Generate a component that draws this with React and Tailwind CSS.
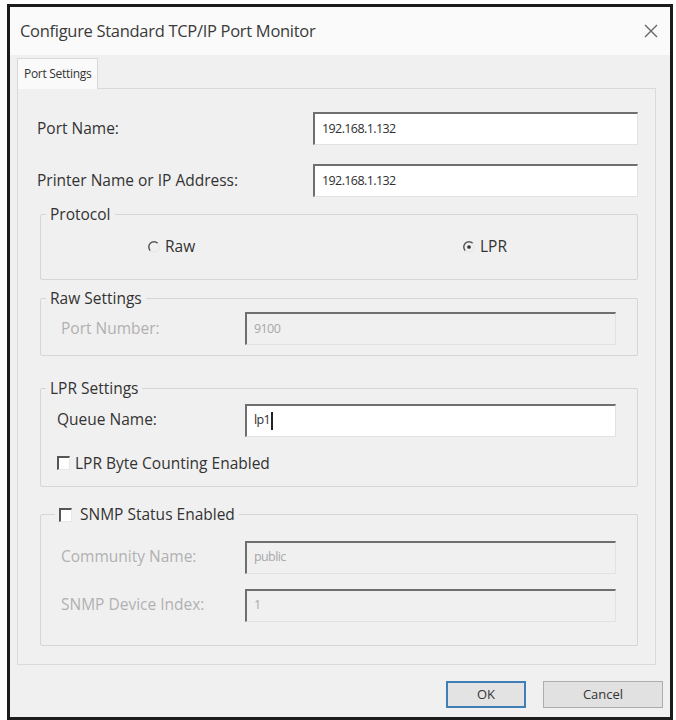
import React from 'react';

const font = { fontFamily: '"Open Sans", "Noto Sans", sans-serif' };

function Field({ value, disabled, caret, className = '' }) {
  return (
    <div
      className={`h-[33px] flex items-center pl-[7px] text-[12.5px] tracking-[-0.6px] border-t-2 border-l-2 border-t-[#6f6f6f] border-l-[#6f6f6f] border-r border-b border-r-[#e2e2e2] border-b-[#e2e2e2] ${
        disabled ? 'bg-[#f0f0f0] text-[#a8a8a8]' : 'bg-white text-[#2e2e2e]'
      } ${className}`}
    >
      <span>{value}</span>
      {caret && <span className="ml-[1px] w-[2px] h-[18px] bg-[#222]" />}
    </div>
  );
}

function Radio({ checked, label }) {
  return (
    <div className="flex items-center gap-[5px]">
      <svg width="12" height="12" viewBox="0 0 13 13">
        <path d="M10.5 2.5 A5.5 5.5 0 1 0 2.5 10.5" fill="none" stroke="#555" strokeWidth="1.6" />
        <path d="M10.5 2.5 A5.5 5.5 0 0 1 2.5 10.5" fill="none" stroke="#e6e6e6" strokeWidth="1.2" />
        {checked && <circle cx="6.5" cy="6.5" r="2" fill="#333" />}
      </svg>
      <span>{label}</span>
    </div>
  );
}

function Check() {
  return (
    <span className="w-[13px] h-[14px] border-t-2 border-l-2 border-t-[#555] border-l-[#555] border-r border-b border-r-[#e8e8e8] border-b-[#e8e8e8] bg-white" />
  );
}

function Group({ title, children, className = '' }) {
  return (
    <fieldset className={`border border-[#d6d6d6] rounded-[2px] px-[16px] mx-0 ${className}`}>
      <legend className="px-[4px] ml-[-11px] text-[#333]">{title}</legend>
      {children}
    </fieldset>
  );
}

export default function App() {
  return (
    <div className="w-[676px] h-[720px] bg-white pt-[4px] pl-[7px] text-[15.5px] leading-none" style={font}>
      <div className="w-[666px] h-[716px] border-[3px] border-[#1c1c1c] bg-[#f0f0f0] flex flex-col">
        {/* title bar */}
        <div className="h-[48px] bg-[#fafafa] flex items-center justify-between pl-[10px] pr-[12px]">
          <span className="text-[#3a3a3a] text-[16.5px] tracking-[-0.3px]">Configure Standard TCP/IP Port Monitor</span>
          <svg width="14" height="14" viewBox="0 0 14 14">
            <path d="M1 1 L13 13 M13 1 L1 13" stroke="#666" strokeWidth="1.4" />
          </svg>
        </div>

        {/* tabs */}
        <div className="flex items-end pl-[7px] pr-[14px] mt-[3px]">
          <div className="h-[31px] px-[6px] flex items-center bg-[#fafafa] border border-b-0 border-[#d9d9d9] text-[#333] text-[12px] tracking-[-0.3px]">
            Port Settings
          </div>
          <div className="flex-1 border-b border-[#d9d9d9]" />
        </div>

        {/* panel */}
        <div className="mx-[7px] mr-[14px] h-[576px] bg-[#f0f0f0] border border-t-0 border-[#dadada] pl-[22px] pr-[17px] text-[#333]">
          <div className="flex items-center mt-[23px] h-[33px]">
            <span className="w-[276px] ml-[-3px]">Port Name:</span>
            <Field value="192.168.1.132" className="flex-1" />
          </div>
          <div className="flex items-center mt-[19px] h-[33px]">
            <span className="w-[276px] ml-[-3px]">Printer Name or IP Address:</span>
            <Field value="192.168.1.132" className="flex-1" />
          </div>

          <Group title="Protocol" className="mt-[10px] h-[73px]">
            <div className="flex items-center h-[48px] pl-[91px]">
              <div className="w-[315px]">
                <Radio label="Raw" />
              </div>
              <Radio checked label="LPR" />
            </div>
          </Group>

          <Group title="Raw Settings" className="mt-[11px] h-[65px]">
            <div className="flex items-center h-[44px] pr-[5px] text-[#b0b0b0]">
              <span className="w-[188px] pl-[4px]">Port Number:</span>
              <Field value="9100" disabled className="flex-1" />
            </div>
          </Group>

          <Group title="LPR Settings" className="mt-[25px] h-[106px]">
            <div className="flex items-center h-[47px] pr-[5px]">
              <span className="w-[188px]">Queue Name:</span>
              <Field value="lp1" caret className="flex-1" />
            </div>
            <div className="flex items-center gap-[5px] mt-[12px]">
              <Check />
              <span>LPR Byte Counting Enabled</span>
            </div>
          </Group>

          <fieldset className="border border-[#d6d6d6] rounded-[2px] px-[16px] mt-[20px] h-[139px]">
            <legend className="px-[4px] ml-[-2px] flex items-center gap-[8px] text-[#333]">
              <Check />
              <span>SNMP Status Enabled</span>
            </legend>
            <div className="flex items-center h-[35px] mt-[17px] pr-[5px] text-[#b0b0b0]">
              <span className="w-[188px] pl-[4px]">Community Name:</span>
              <Field value="public" disabled className="flex-1" />
            </div>
            <div className="flex items-center h-[35px] mt-[13px] pr-[5px] text-[#b0b0b0]">
              <span className="w-[188px] pl-[4px]">SNMP Device Index:</span>
              <Field value="1" disabled className="flex-1" />
            </div>
          </fieldset>
        </div>

        {/* buttons */}
        <div className="flex justify-end gap-[17px] pr-[7px] mt-[16px]">
          <button className="w-[80px] h-[27px] border-2 border-[#3f7fb5] bg-[#e3e3e3] text-[#333] text-[13px]">OK</button>
          <button className="w-[120px] h-[27px] border border-[#adadad] bg-[#e1e1e1] text-[#333] text-[13px]">Cancel</button>
        </div>
      </div>
    </div>
  );
}
